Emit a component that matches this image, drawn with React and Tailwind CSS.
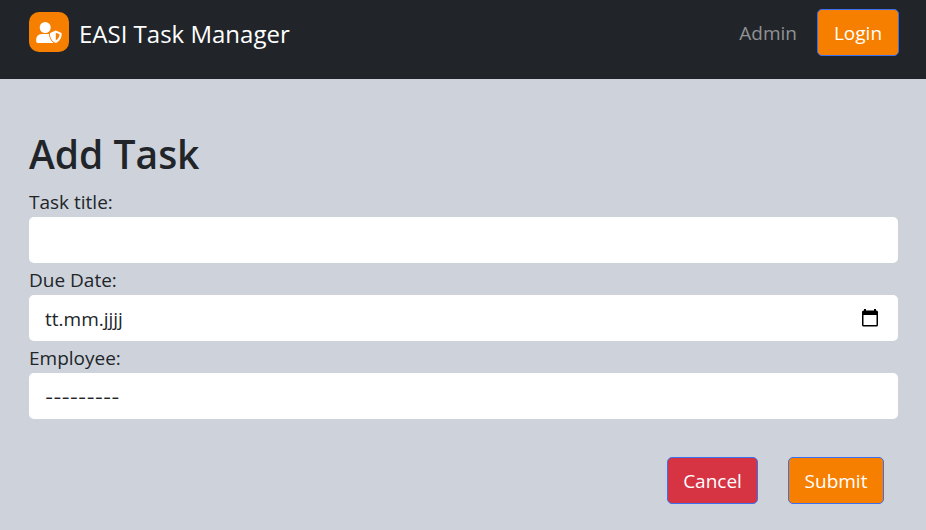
function UserShieldIcon() {
  return (
    <svg viewBox="0 0 26 21" className="h-[21px] w-[26px]" aria-hidden="true">
      <circle cx="9.200" cy="5.500" r="5.500" fill="#fff" />
      <path
        fill="#fff"
        d="M5.500 12H13c1 2.500 2 6.500 5 9H1.800A1.700 1.700 0 0 1 .2 19.300V17.300A5.300 5.300 0 0 1 5.500 12z"
      />
      <path
        fill="#fff"
        stroke="#f77f00"
        strokeWidth="1.600"
        paintOrder="stroke"
        d="M19.800 8.600 25 10.700a1.100 1.100 0 0 1 .7 1c0 4.400-2.300 7.600-5.400 9a1.200 1.200 0 0 1-1 0c-3.100-1.400-5.400-4.600-5.400-9a1.100 1.100 0 0 1 .7-1z"
      />
      <path fill="#f77f00" d="M19.800 10.800v7.700c2.200-1.200 3.600-3.400 3.800-6.200z" />
    </svg>
  );
}

function ActionButton({ type = "button", className = "", children }) {
  return (
    <button
      type={type}
      className={`h-[47px] rounded-[5px] border border-[#3b71f0] pt-0.5 text-center text-[19px] text-white ${className}`}
    >
      {children}
    </button>
  );
}

function Field({ id, label, children }) {
  return (
    <div className="flex flex-col">
      <label htmlFor={id} className="h-8 text-[19px] leading-[34px]">
        {label}
      </label>
      {children}
    </div>
  );
}

const controlClass =
  "h-[46px] w-full rounded-[5px] bg-white px-4 pt-0.5 text-[#212529] outline-none placeholder:text-[#212529]";

function CalendarIcon() {
  return (
    <svg viewBox="0 0 18 20" className="h-5 w-[18px]" aria-hidden="true">
      <path
        fill="#000"
        fillRule="evenodd"
        d="M3 1h2v1.5h8V1h2v1.5h.5A1.5 1.5 0 0 1 17 4v13a1.5 1.5 0 0 1-1.500 1.500h-13A1.500 1.500 0 0 1 1 17V4a1.500 1.500 0 0 1 1.500-1.500H3zM2.500 7v10h13V7z"
      />
    </svg>
  );
}

export default function App() {
  return (
    <div className="min-h-screen bg-[#ced3db] font-['Open_Sans','Noto_Sans',sans-serif] text-[#212529]">
      <header className="flex h-[79px] items-start justify-between bg-[#212529] pt-[9px] pr-[27px] pl-[29px]">
        <a href="#" className="flex h-[46px] items-center gap-[10px] text-[24px] text-white">
          <span className="flex size-10 items-center justify-center rounded-[10px] bg-[#f77f00]">
            <UserShieldIcon />
          </span>
          <span className="pt-1">EASI Task Manager</span>
        </a>
        <nav className="flex items-center gap-5">
          <a href="#" className="pt-0.5 text-[19px] text-[#909294]">
            Admin
          </a>
          <ActionButton className="w-[82px] bg-[#f77f00]">Login</ActionButton>
        </nav>
      </header>

      <main className="pt-[50px] pr-7 pl-[29px]">
        <h1 className="mb-2 pt-0.5 text-[39px] leading-[46px] font-semibold">Add Task</h1>
        <form>
          <Field id="title" label="Task title:">
            <input id="title" type="text" className={`${controlClass} text-[19px]`} />
          </Field>
          <Field id="due" label="Due Date:">
            <div className="relative">
              <input
                id="due"
                type="text"
                placeholder="tt.mm.jjjj"
                className={`${controlClass} text-[19px]`}
              />
              <button
                type="button"
                aria-label="Open calendar"
                className="absolute inset-y-0 right-[19px] flex items-center"
              >
                <CalendarIcon />
              </button>
            </div>
          </Field>
          <Field id="employee" label="Employee:">
            <select
              id="employee"
              className={`${controlClass} appearance-none font-['Inter',sans-serif] text-[18px]`}
            >
              <option>---------</option>
            </select>
          </Field>
          <div className="mt-[38px] flex justify-end gap-[30px] pr-[14px]">
            <ActionButton className="w-[91px] bg-[#d63343]">Cancel</ActionButton>
            <ActionButton type="submit" className="w-[96px] bg-[#f77f00]">
              Submit
            </ActionButton>
          </div>
        </form>
      </main>
    </div>
  );
}
